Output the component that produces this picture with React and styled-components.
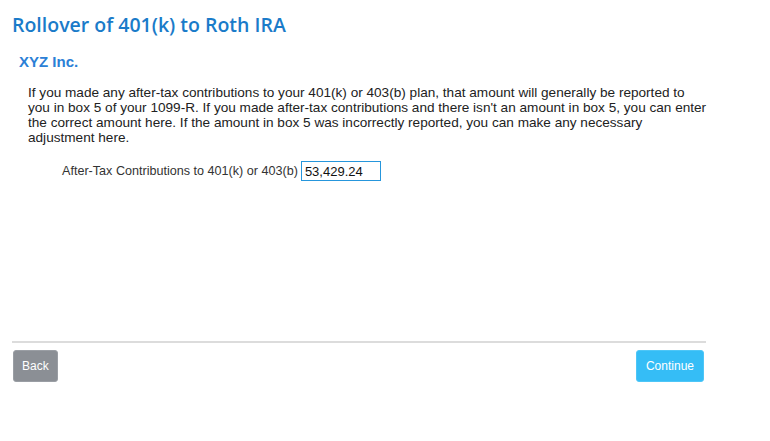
import React from 'react';
import styled, { createGlobalStyle } from 'styled-components';

const GlobalStyle = createGlobalStyle`
  body {
    margin: 0;
    background: #fff;
    font-family: "Liberation Sans", Arial, sans-serif;
  }
`;

const Page = styled.div`
  width: 694px;
  padding: 11px 0 0 12px;
  display: flex;
  flex-direction: column;
`;

const Title = styled.h1`
  margin: 0;
  font-family: "Open Sans", sans-serif;
  font-weight: 600;
  font-size: 19.5px;
  line-height: 27px;
  color: #1a7bc9;
`;

const Company = styled.h2`
  margin: 15px 0 0 7px;
  font-family: "Liberation Sans", Arial, sans-serif;
  font-weight: bold;
  font-size: 15px;
  line-height: 18px;
  color: #2b80d6;
`;

const Body = styled.div`
  padding: 14px 0 0 16px;
  height: 256px;
`;

const Text = styled.p`
  margin: 0;
  width: 680px;
  font-size: 13.6px;
  line-height: 15px;
  color: #222;
`;

const Field = styled.div`
  display: flex;
  align-items: center;
  gap: 3px;
  margin: 16px 0 0 34px;
  font-size: 12.6px;
  color: #333;
`;

const Input = styled.input`
  width: 72px;
  height: 16px;
  padding: 1px 3px;
  border: 1px solid #2696dc;
  font-family: "Liberation Sans", Arial, sans-serif;
  font-size: 13px;
  color: #111;
  outline: none;
`;

const Footer = styled.div`
  border-top: 2px solid #dcdcdc;
  display: flex;
  justify-content: space-between;
  padding: 7px 2px 0 1px;
`;

const Button = styled.button`
  height: 32px;
  padding: 0 ${p => p.$pad}px;
  border: 1px solid ${p => p.$edge};
  border-radius: 3px;
  background: ${p => p.$bg};
  color: #fff;
  font-family: "Liberation Sans", Arial, sans-serif;
  font-size: 12px;
`;

export default function App() {
  return (
    <Page>
      <GlobalStyle />
      <Title>Rollover of 401(k) to Roth IRA</Title>
      <Company>XYZ Inc.</Company>
      <Body>
        <Text>
          If you made any after-tax contributions to your 401(k) or 403(b) plan, that amount will generally be reported to
          you in box 5 of your 1099-R. If you made after-tax contributions and there isn't an amount in box 5, you can enter
          the correct amount here. If the amount in box 5 was incorrectly reported, you can make any necessary
          adjustment here.
        </Text>
        <Field>
          <span>After-Tax Contributions to 401(k) or 403(b)</span>
          <Input defaultValue="53,429.24" />
        </Field>
      </Body>
      <Footer>
        <Button $bg="#8b8f95" $edge="#9a9ea4" $pad={8}>Back</Button>
        <Button $bg="#35bdf6" $edge="#4ec6f7" $pad={9}>Continue</Button>
      </Footer>
    </Page>
  );
}
